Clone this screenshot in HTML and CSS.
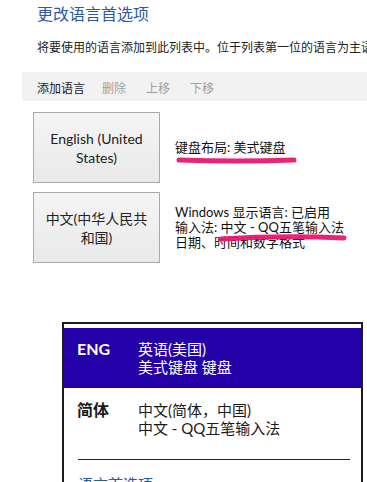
FILE: index.html
```html
<!DOCTYPE html>
<html lang="zh-CN">
<head>
  <meta charset="UTF-8">
  <meta name="viewport" content="width=device-width, initial-scale=1.0">
  <title>语言</title>
  <link rel="stylesheet" href="styles.css">
</head>
<body>
  <div class="page">
    <div class="header">
      <h1 class="title">更改语言首选项</h1>
      <p class="intro">将要使用的语言添加到此列表中。位于列表第一位的语言为主语言。</p>
    </div>

    <div class="toolbar">
      <span class="tool active">添加语言</span>
      <span class="tool">删除</span>
      <span class="tool">上移</span>
      <span class="tool">下移</span>
    </div>

    <div class="lang-list">
      <div class="lang-row">
        <div class="lang-tile">English (United States)</div>
        <div class="lang-info">
          <div>键盘布局: 美式键盘</div>
        </div>
      </div>
      <div class="lang-row">
        <div class="lang-tile">中文(中华人民共和国)</div>
        <div class="lang-info">
          <div>Windows 显示语言: 已启用</div>
          <div>输入法: 中文 - QQ五笔输入法</div>
          <div>日期、时间和数字格式</div>
        </div>
      </div>
    </div>

    <!-- hand-drawn marks over the text -->
    <svg class="marks" width="367" height="300" viewBox="0 0 367 300">
      <path d="M179 160 Q 237 162 294 160" />
      <path d="M221 239 Q 283 235 344 238" />
    </svg>

    <div class="flyout">
      <div class="ime-item selected">
        <div class="ime-code">ENG</div>
        <div class="ime-text">
          <div>英语(美国)</div>
          <div>美式键盘 键盘</div>
        </div>
      </div>
      <div class="ime-item">
        <div class="ime-code cjk">简体</div>
        <div class="ime-text">
          <div>中文(简体，中国)</div>
          <div>中文 - QQ五笔输入法</div>
        </div>
      </div>
      <div class="divider"></div>
      <div class="flyout-link">语言首选项</div>
    </div>
  </div>
</body>
</html>
```

FILE: styles.css
```css
body {
  margin: 0;
  font-family: Lato, "Noto Sans CJK SC", sans-serif;
  color: #1a1a1a;
  background-color: #fff;
  overflow: hidden;
}

.page {
  position: relative;
  width: 367px;
  height: 482px;
  overflow: hidden;
}

.header {
  padding: 4px 0 0 37px;
}

.title {
  margin: 0;
  font-size: 16px;
  font-weight: 400;
  line-height: 20px;
  color: #2d58a6;
}

.intro {
  margin: 16px 0 0;
  font-size: 12px;
  line-height: 16px;
  color: #222;
  white-space: nowrap;
}

.toolbar {
  display: flex;
  align-items: center;
  height: 29px;
  margin: 16px 0 0 22px;
  padding: 2px 0 0 15px;
  box-sizing: border-box;
  background-color: #f2f2f2;
  font-size: 12px;
}

.tool {
  margin-right: 20px;
  color: #a0a0a0;
}

.tool.active {
  margin-right: 17px;
  color: #1a1a1a;
}

.lang-list {
  display: flex;
  flex-direction: column;
  gap: 9px;
  padding: 11px 0 0 33px;
}

.lang-row {
  display: flex;
  align-items: center;
}

.lang-tile {
  display: flex;
  align-items: center;
  justify-content: center;
  width: 127px;
  height: 71px;
  padding: 0 8px;
  box-sizing: border-box;
  border: 1px solid #a9a9a9;
  background: linear-gradient(#f5f5f5, #e9e9e9);
  text-align: center;
  font-size: 14px;
  line-height: 19px;
  color: #222;
}

.lang-info {
  margin-left: 15px;
  font-size: 13px;
  line-height: 15px;
  color: #111;
}

.marks {
  position: absolute;
  top: 0;
  left: 0;
  pointer-events: none;
}

.marks path {
  fill: none;
  stroke: #e8176f;
  stroke-width: 5;
  stroke-linecap: round;
  opacity: 0.95;
}

.flyout {
  position: absolute;
  top: 322px;
  left: 62px;
  width: 301px;
  height: 180px;
  padding-top: 4px;
  box-sizing: border-box;
  border: 2px solid #1c1c1c;
  border-bottom: none;
  background-color: #fff;
}

.ime-item {
  display: flex;
  padding: 13px 0 0 13px;
  font-size: 15px;
  line-height: 18px;
}

.ime-item.selected {
  height: 60px;
  padding: 12px 0 0 13px;
  box-sizing: border-box;
  background-color: #2400a8;
  color: #fff;
}

.ime-code {
  width: 61px;
  font-size: 16px;
  font-weight: 700;
}

.ime-code.cjk {
  font-size: 16px;
}

.divider {
  height: 1px;
  width: 272px;
  margin: 22px 0 0 14px;
  background-color: #222;
}

.flyout-link {
  margin: 15px 0 0 14px;
  font-size: 15px;
  line-height: 18px;
  color: #2d58a6;
}
```
